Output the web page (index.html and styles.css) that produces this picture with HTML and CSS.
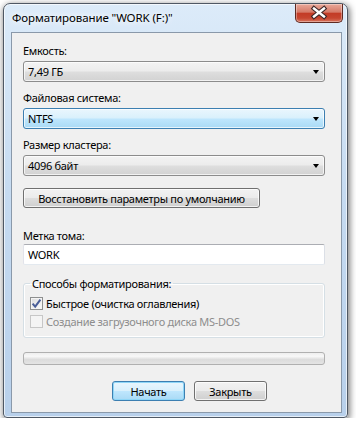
FILE: index.html
```html
<!DOCTYPE html>
<html lang=ru><head>
<meta charset=UTF-8>
<meta name=viewport content="width=device-width,initial-scale=1">
<title>Форматирование</title><link rel="stylesheet" href="styles.css"></head><body>
<div class=window>
<div class=titlebar>
<span class=title>Форматирование "WORK (F:)"</span>
<button class=close><svg width=46 height=18 viewBox="0 0 46 18"><path d="M18 4.5L28 12.5M28 4.5L18 12.5" stroke="#3b2626" stroke-width=4.6 stroke-linecap=square /><path d="M18 4.5L28 12.5M28 4.5L18 12.5" stroke="#fff" stroke-width=2.4 stroke-linecap=square /></svg></button>
</div>
<div class=client>
<div class=label>Емкость:</div>
<div class=combo><span>7,49 ГБ</span><i class=arrow></i></div>
<div class=label>Файловая система:</div>
<div class="combo focus"><span>NTFS</span><i class=arrow></i></div>
<div class=label>Размер кластера:</div>
<div class=combo><span>4096 байт</span><i class=arrow></i></div>
<div class="btn restore">Восстановить параметры по умолчанию</div>
<div class="label tight">Метка тома:</div>
<div class=textbox>WORK</div>
<fieldset class=group><legend>Способы форматирования:</legend>
<div class=check><span class="box on"><svg width=11 height=11 viewBox="0 0 11 11"><path d="M1.6 5.6L4.2 8.6L9.4 1.6" fill=none stroke="#4a5e98" stroke-width=2 /></svg></span>Быстрое (очистка оглавления)</div>
<div class="check off"><span class=box></span>Создание загрузочного диска MS-DOS</div>
</fieldset>
<div class=progress></div>
<div class=actions><div class="btn default">Начать</div><div class=btn>Закрыть</div></div>
</div>
</div>
</body></html>
```
FILE: styles.css
```css
body{margin:0;background:#fff;font:11px "Noto Sans",sans-serif;letter-spacing:-.3px;color:#000}
.window{margin:3px 0 0 3px;width:331px;border:1px solid #4f5864;border-radius:7px 7px 4px 4px;padding:0 5px 4px 7px;background:linear-gradient(#dcebf9,#c6dbf1 45%,#b8d0eb);box-shadow:1px 2px 6px 1px rgba(0,0,0,.5),inset 0 0 0 1px rgba(255,255,255,.65)}
.titlebar{height:28px;display:flex;justify-content:space-between;align-items:flex-start}
.title{margin:6px 0 0 1px;font-size:11.5px;letter-spacing:-.1px;line-height:15px;text-shadow:0 0 6px #fff,0 0 10px #fff}
.close{width:48px;height:19px;margin-right:-1px;padding:0;border:1px solid #5e2a22;border-top:none;border-radius:0 0 5px 5px;background:linear-gradient(#eaa99a,#d57a68 45%,#c33b26 52%,#c6452f 78%,#d8765f);box-shadow:inset 0 0 0 1px rgba(255,255,255,.35);display:flex;align-items:center;justify-content:center}
.client{box-sizing:border-box;height:381px;border:1px solid #8a99aa;background:#f0f0f0;padding:10px 16px 0 11px}
.label{height:15px;line-height:15px;margin-bottom:3px}
.label.tight{margin:20px 0 1px}
.combo{box-sizing:border-box;height:21px;margin-bottom:8px;border:1px solid #8c8c8c;border-radius:3px;background:linear-gradient(#f3f3f3,#ececec 48%,#dedede 52%,#d2d2d2);box-shadow:inset 0 0 0 1px rgba(255,255,255,.7);display:flex;align-items:center;justify-content:space-between;padding:0 5px 0 4px}
.combo.focus{border-color:#3c7fb1;background:linear-gradient(#eaf6fd,#d9f0fc 48%,#bee6fd 52%,#a9daf5)}
.combo:nth-of-type(6){margin-bottom:0}
.arrow{width:0;height:0;border-left:3.5px solid transparent;border-right:3.5px solid transparent;border-top:4px solid #000}
.btn{box-sizing:border-box;height:20px;border:1px solid #707070;border-radius:3px;background:linear-gradient(#f2f2f2,#ebebeb 48%,#dddddd 52%,#cfcfcf);box-shadow:inset 0 0 0 1px rgba(255,255,255,.75);display:flex;align-items:center;justify-content:center}
.restore{width:237px;margin-top:12px}
.textbox{box-sizing:border-box;height:21px;border:1px solid;border-color:#abadb3 #dbdfe6 #e3e9ef #e2e3ea;border-radius:2px;background:#fff;padding-left:4px;line-height:19px}
.group{margin:11px 0 0;padding:3px 6px 7px;border:1px solid #d5dfe5;border-radius:3px;box-shadow:inset 0 0 0 1px #fff}
.group legend{padding:0 2px;line-height:15px}
.check{height:18px;display:flex;align-items:center}
.box{box-sizing:border-box;width:13px;height:13px;margin-right:3px;border:1px solid #8e8f8f;background:linear-gradient(135deg,#dcdcdc,#fbfbfb);box-shadow:inset 0 0 0 1px #f4f4f4;display:flex;align-items:center;justify-content:center}
.off{color:#8d8d8d}
.off .box{border-color:#c7c7c7;background:#f4f4f4;box-shadow:none}
.progress{box-sizing:border-box;height:13px;margin-top:14px;border:1px solid #b0b0b0;border-radius:3px;background:linear-gradient(#eeeeee,#f8f8f8 30%,#dcdcdc 60%,#e4e4e4)}
.actions{display:flex;gap:9px;margin:16px 0 0 89px}
.actions .btn{width:73px}
.btn.default{border-color:#3c7fb1;background:linear-gradient(#eaf6fd,#d9f0fc 48%,#bee6fd 52%,#a9daf5);box-shadow:inset 0 0 0 1px #8fd6f7}
```
